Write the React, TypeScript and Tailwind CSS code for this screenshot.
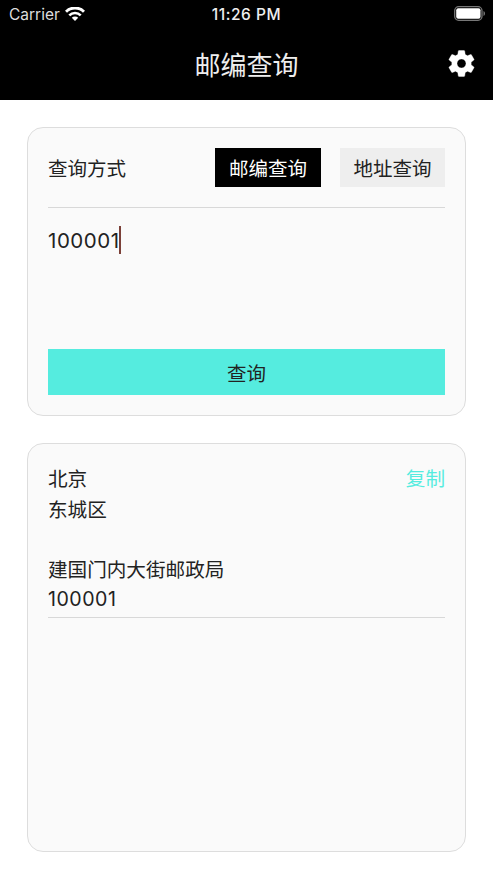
import { useState } from "react";

const results = [
  {
    city: "北京",
    district: "东城区",
    office: "建国门内大街邮政局",
    zip: "100001",
  },
];

const GearIcon = () => (
  <svg className="size-[31px]" viewBox="0 0 24 24" fill="currentColor" stroke="currentColor" strokeWidth="0.3">
    <path d="M19.43 12.98c.04-.32.07-.64.07-.98s-.03-.66-.07-.98l2.11-1.65c.19-.15.24-.42.12-.64l-2-3.46c-.12-.22-.39-.3-.61-.22l-2.49 1c-.52-.4-1.08-.73-1.69-.98l-.38-2.65C14.46 2.18 14.25 2 14 2h-4c-.25 0-.46.18-.49.42l-.38 2.65c-.61.25-1.17.59-1.69.98l-2.49-1c-.23-.09-.49 0-.61.22l-2 3.46c-.13.22-.07.49.12.64l2.11 1.65c-.04.32-.07.65-.07.98s.03.66.07.98l-2.11 1.65c-.19.15-.24.42-.12.64l2 3.46c.12.22.39.3.61.22l2.49-1c.52.4 1.08.73 1.69.98l.38 2.65c.03.24.24.42.49.42h4c.25 0 .46-.18.49-.42l.38-2.65c.61-.25 1.17-.59 1.69-.98l2.49 1c.23.09.49 0 .61-.22l2-3.46c.12-.22.07-.49-.12-.64l-2.11-1.65zM12 15.5c-1.93 0-3.5-1.57-3.5-3.5s1.57-3.5 3.5-3.5 3.5 1.57 3.5 3.5-1.57 3.5-3.5 3.5z" />
  </svg>
);

const StatusBar = () => (
  <div className="relative flex h-7 items-center justify-between pl-[9px] pr-[8px] font-[Inter,sans-serif] text-white">
    <div className="flex items-center gap-[5px] pt-px">
      <span className="text-[15.5px] leading-7 text-[#ddd]">Carrier</span>
      <svg className="-mt-px h-[14px] w-[20px]" viewBox="0 0 20 14" fill="none" stroke="currentColor">
        <path d="M1 4.7a12.8 12.8 0 0 1 18 0" strokeWidth="2.9" />
        <path d="M4.3 8.3a8.1 8.1 0 0 1 11.4 0" strokeWidth="2.6" />
        <path d="M10 13.9 6.8 10.7a4.6 4.6 0 0 1 6.4 0Z" fill="currentColor" stroke="none" />
      </svg>
    </div>
    <span className="absolute inset-x-0 top-px text-center text-[15.5px] font-medium leading-7 tracking-[0.55px] text-[#eee]">
      11:26 PM
    </span>
    <svg className="-mt-px h-[15px] w-[31px]" viewBox="0 0 31 15">
      <rect x="0.7" y="0.7" width="27.3" height="13.6" rx="4" fill="none" stroke="#777" strokeWidth="1.3" />
      <rect x="2.2" y="2.2" width="24.3" height="10.6" rx="2" fill="#fff" />
      <path d="M29.5 5v5c1-.4 1.5-1.4 1.5-2.5S30.5 5.4 29.5 5Z" fill="#777" />
    </svg>
  </div>
);

export default function App() {
  const [mode, setMode] = useState("zip");

  const tabClass = (active: boolean) =>
    active ? "bg-black text-white" : "bg-[#eeeeee] text-[#222]";

  return (
    <div className="flex h-[879px] w-[493px] flex-col overflow-hidden bg-white font-[Inter,'Noto_Sans_CJK_SC',sans-serif] text-[#222]">
      <header className="h-[100px] shrink-0 bg-black text-white">
        <StatusBar />
        <div className="relative flex h-[72px] items-center justify-center">
          <h1 className="pt-[3px] text-[26px] leading-none text-[#eee]">邮编查询</h1>
          <button className="absolute right-[16.5px] top-[20px]">
            <GearIcon />
          </button>
        </div>
      </header>

      <main className="flex flex-col gap-[27px] px-[27px] pt-[27px]">
        {/* Search card */}
        <section className="flex h-[289px] flex-col rounded-[16px] border border-[#ddd] bg-[#fafafa] px-5 pb-5 pt-5">
          <div className="flex h-[60px] items-start border-b border-[#d8d8d8] text-[19.5px]">
            <span className="flex-1 leading-[42px]">查询方式</span>
            <div className="flex gap-[19px]">
              <button onClick={() => setMode("zip")} className={`h-[39px] w-[106px] pt-[4px] ${tabClass(mode === "zip")}`}>
                邮编查询
              </button>
              <button onClick={() => setMode("address")} className={`h-[39px] w-[105px] pt-[4px] ${tabClass(mode === "address")}`}>
                地址查询
              </button>
            </div>
          </div>
          <div className="flex flex-1 items-start pt-[18px] text-[20.5px] leading-7">
            <span className="w-[71px] whitespace-nowrap pt-px tracking-[0.55px]">100001</span>
            <span className="h-[28px] w-[2px] bg-[#7b4038]" />
          </div>
          <button className="h-[46px] bg-[#55ecdf] pt-[5px] text-[19.5px]">查询</button>
        </section>

        {/* Results card */}
        <section className="h-[409px] rounded-[16px] border border-[#ddd] bg-[#fafafa] px-5 pt-5 text-[19.6px]">
          {results.map((item) => (
            <div key={item.zip} className="flex h-[154px] items-start justify-between border-b border-[#d8d8d8]">
              <div className="leading-[30px]">
                <p>{item.city}</p>
                <p className="pt-px">{item.district}</p>
                <p className="mt-[30px]">{item.office}</p>
                <p className="-mt-px tracking-[0.5px]">{item.zip}</p>
              </div>
              <button className="leading-[30px] text-[#55ecdf]">复制</button>
            </div>
          ))}
        </section>
      </main>
    </div>
  );
}
